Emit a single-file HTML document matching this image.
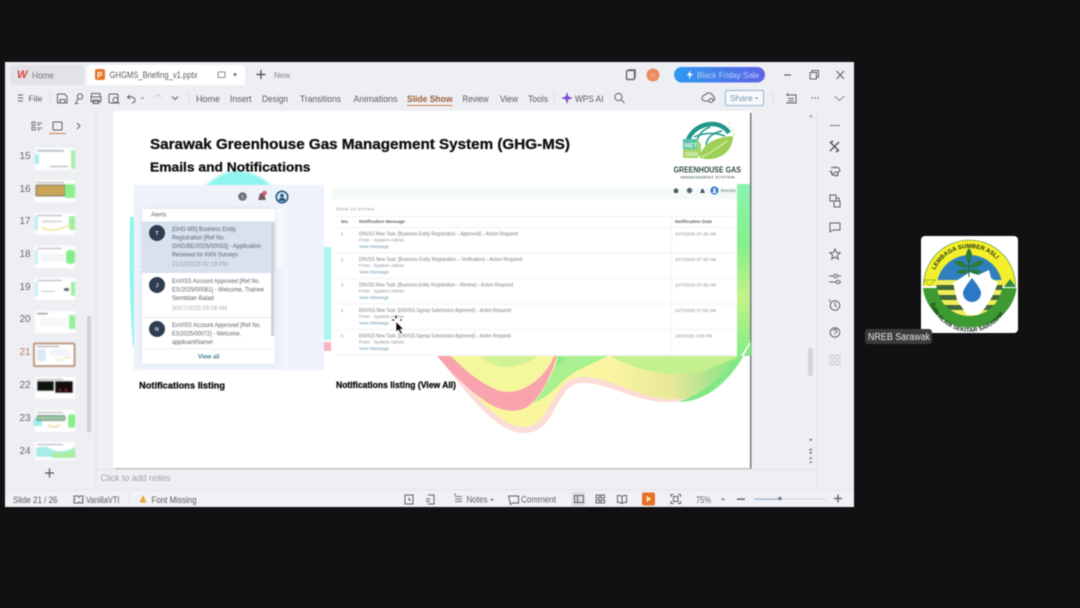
<!DOCTYPE html>
<html><head><meta charset="utf-8"><style>
html,body{margin:0;padding:0;background:#111114;width:1080px;height:608px;overflow:hidden}
svg{position:absolute;left:0;top:0;display:block;filter:blur(.42px)}
text{font-family:"Liberation Sans",sans-serif}
.u{font-size:9.500px;fill:#5a5b5f}
.ic{fill:none;stroke:#606165;stroke-width:1}
.t{font-size:5px;fill:#7a808a}
.l{font-size:4.2px;fill:#8b9098}
.v{font-size:4.2px;fill:#6a98ae}
.a{font-size:6px;fill:#5c636d}
.h{stroke:#111;stroke-width:.3px}
</style></head><body>
<svg width="1080" height="608" viewBox="0 0 1080 608" xmlns="http://www.w3.org/2000/svg">
<defs>
<linearGradient id="bf" x1="0" x2="1" y1="0" y2="0"><stop offset="0" stop-color="#2d9bf0"/><stop offset="1" stop-color="#5f63e8"/></linearGradient>
<linearGradient id="wav" x1="0" x2="1" y1="0" y2="0"><stop offset="0" stop-color="#f8f79c"/><stop offset=".55" stop-color="#fbf5a0"/><stop offset=".75" stop-color="#e6e898"/><stop offset=".88" stop-color="#a5e48e"/><stop offset="1" stop-color="#74ee80"/></linearGradient>
<linearGradient id="grn" x1="0" x2="0" y1="0" y2="1"><stop offset="0" stop-color="#8cf2b0"/><stop offset=".35" stop-color="#85f08a"/><stop offset=".65" stop-color="#c4f28a"/><stop offset="1" stop-color="#7eee84"/></linearGradient>
<path id="arcT" d="M935 270A38 38 0 0 1 1004 270"/>
<path id="arcB" d="M930 302A41 41 0 0 0 1009 302"/>
<clipPath id="disc"><circle cx="969.500" cy="283" r="33"/></clipPath>
<filter id="b1"><feGaussianBlur stdDeviation=".45"/></filter>
<filter id="b2"><feGaussianBlur stdDeviation="2.500"/></filter>
<filter id="b3"><feGaussianBlur stdDeviation="1.200"/></filter>
</defs>
<rect width="1080" height="608" fill="#111114"/>
<!-- window -->
<rect x="5" y="62" width="849" height="445" fill="#eeeff3"/>
<rect x="5" y="490" width="849" height="17" fill="#f0f1f5"/>
<line x1="5" y1="490" x2="854" y2="490" stroke="#e4e5e9"/>
<!-- tabs -->
<rect x="10" y="65" width="74" height="20" rx="3" fill="#e2e3e7"/>
<text x="17" y="78" font-size="11" font-weight="bold" fill="#d8413a" font-style="italic">W</text>
<text x="32" y="78.500" class="u" style="fill:#75767a" textLength="22" lengthAdjust="spacingAndGlyphs">Home</text>
<path d="M87 85V69a4 4 0 0 1 4-4h150a4 4 0 0 1 4 4v16z" fill="#fff"/>
<rect x="95" y="69" width="10" height="11" rx="2" fill="#e8762e"/>
<text x="97" y="78" font-size="8" fill="#fff" font-weight="bold">P</text>
<text x="109.500" y="78" class="u" textLength="88" lengthAdjust="spacingAndGlyphs">GHGMS_Briefing_v1.pptx</text>
<rect x="218" y="72" width="7" height="5.500" rx="1" class="ic" style="stroke:#8a8b90"/>
<circle cx="235" cy="74.500" r="1.500" fill="#777"/>
<path d="M256.500 74.500h9M261 70v9" stroke="#444" stroke-width="1.200" fill="none"/>
<text x="274" y="78" font-size="8" fill="#85868a">New</text>
<!-- title bar right -->
<rect x="626.500" y="70.500" width="8" height="9" rx="1" class="ic" style="stroke:#555;stroke-width:1.200"/>
<path d="M629 70v-.5h6.500v8.500" class="ic" style="stroke:#888"/>
<circle cx="653" cy="75" r="6.500" fill="#e98a5f"/>
<text x="650" y="77.500" font-size="6" fill="#f6c7ad">AI</text>
<rect x="674" y="67" width="91" height="15.500" rx="7.700" fill="url(#bf)"/>
<path d="M691 70l-4 5.500h2.800l-1.300 4 4.300-5.800h-2.800z" fill="#fff"/>
<text x="697" y="78" font-size="8.500" fill="#b9d2f4" textLength="62" lengthAdjust="spacingAndGlyphs">Black Friday Sale</text>
<path d="M784 75h7" stroke="#555" stroke-width="1.100"/>
<rect x="810" y="72.500" width="6.500" height="6.500" class="ic"/><path d="M812 72.500v-2h6.500v6.500h-2" class="ic"/>
<path d="M836.500 71l7.500 8M844 71l-7.500 8" class="ic" style="stroke-width:1.100"/>
<!-- toolbar -->
<path d="M18 95h5M18 98h5M18 101h5" class="ic"/>
<text x="28.500" y="101.500" class="u" style="font-size:8.500px">File</text>
<line x1="50" y1="92" x2="50" y2="104" stroke="#dfe0e4"/>
<path d="M57.500 94h7l2.500 2.500V103h-9.500zM60 103v-3.500h5v3.500" class="ic"/>
<circle cx="80" cy="96.500" r="2.700" class="ic"/><path d="M78 99l-2.500 4.500h3" class="ic"/>
<path d="M91.500 96.500v-3h8.500v3M91 97h10v4.500H91zM93 100h6v3.500h-6z" class="ic"/>
<rect x="109" y="94" width="9" height="9" rx="1.500" class="ic"/><circle cx="115.500" cy="100" r="2.500" class="ic"/><path d="M117.500 102l2 2" class="ic"/>
<path d="M130 95l-2.500 2 2.500 2M128 97h4a3 3 0 0 1 0 6" class="ic"/>
<path d="M141 97.500l1.500 1.500 1.500-1.500" fill="#666"/>
<path d="M155 97a3 3 0 0 1 4-2l2 2" fill="none" stroke="#c4c5c8"/>
<path d="M172 96.500l3 3 3-3" class="ic"/>
<line x1="189" y1="92" x2="189" y2="104" stroke="#dfe0e4"/>
<text x="196" y="102" class="u" textLength="24" lengthAdjust="spacingAndGlyphs">Home</text>
<text x="230" y="102" class="u" textLength="21.500" lengthAdjust="spacingAndGlyphs">Insert</text>
<text x="262" y="102" class="u" textLength="26" lengthAdjust="spacingAndGlyphs">Design</text>
<text x="300" y="102" class="u" textLength="41" lengthAdjust="spacingAndGlyphs">Transitions</text>
<text x="353.500" y="102" class="u" textLength="44" lengthAdjust="spacingAndGlyphs">Animations</text>
<text x="407" y="102" class="u" font-weight="bold" style="fill:#9c5e3c" textLength="45.500" lengthAdjust="spacingAndGlyphs">Slide Show</text>
<rect x="407" y="105" width="45.500" height="1" fill="#cf7c4e"/>
<text x="462.500" y="102" class="u" textLength="26" lengthAdjust="spacingAndGlyphs">Review</text>
<text x="500" y="102" class="u" textLength="18" lengthAdjust="spacingAndGlyphs">View</text>
<text x="528" y="102" class="u" textLength="20" lengthAdjust="spacingAndGlyphs">Tools</text>
<line x1="554" y1="92" x2="554" y2="104" stroke="#dfe0e4"/>
<path d="M567 92l1.500 4.500 4.500 1.500-4.500 1.500-1.500 4.500-1.500-4.500-4.500-1.500 4.500-1.500z" fill="#7a52d8"/>
<text x="575" y="102" class="u" textLength="28.500" lengthAdjust="spacingAndGlyphs">WPS AI</text>
<circle cx="618.500" cy="97" r="3.600" class="ic"/><path d="M621 99.500l3.500 3.500" class="ic"/>
<path d="M705 101a3 3 0 0 1 0-6 4.500 4.500 0 0 1 8 1 2.800 2.800 0 0 1 0 5z" class="ic"/>
<circle cx="711" cy="100.500" r="2" class="ic" style="fill:#eeeff3"/>
<rect x="725.500" y="90.500" width="38" height="15" rx="1.500" fill="#f8f9fb" stroke="#8fb6d0"/>
<text x="730" y="101" font-size="8.500" fill="#6c98b4">Share</text>
<path d="M755 97.500h3.500l-1.750 1.700z" fill="#6c8ea5"/>
<line x1="773" y1="92" x2="773" y2="104" stroke="#dfe0e4"/>
<path d="M786 95h10v8h-10M788 93v3M788 98.500h6M788 101h6" class="ic"/>
<circle cx="812" cy="98" r=".7" fill="#555"/><circle cx="815" cy="98" r=".7" fill="#555"/><circle cx="818" cy="98" r=".7" fill="#555"/>
<path d="M834.500 96l5 4.500 5-4.500" class="ic" style="stroke:#888"/>
<!-- thumbs pane -->
<line x1="96" y1="111" x2="96" y2="490" stroke="#e3e4e8"/>
<path d="M32 122h3v3h-3zM32 127h3v3h-3zM37 123h5M37 125h3M37 128h5M37 130h3" class="ic" style="stroke:#777"/>
<rect x="53" y="122" width="9" height="8" rx=".5" class="ic"/>
<rect x="49" y="133" width="17" height="1" fill="#d08258"/>
<path d="M77 123l3 3-3 3" class="ic" style="stroke:#666"/>
<g font-size="10" fill="#66686c">
<text x="19.500" y="159">15</text><text x="19.500" y="192">16</text><text x="19.500" y="224">17</text><text x="19.500" y="257">18</text><text x="19.500" y="290">19</text><text x="19.500" y="322">20</text><text x="19.500" y="355" fill="#b9805f">21</text><text x="19.500" y="388">22</text><text x="19.500" y="421">23</text><text x="19.500" y="454">24</text>
</g>
<!-- thumbnails -->
<g filter="url(#b1)">
<rect x="35" y="148" width="40" height="22" fill="#fff"/><rect x="37" y="150" width="27" height="1.500" fill="#9aa"/><rect x="71" y="150" width="4" height="19" fill="#a5f0b0"/><rect x="35" y="154" width="4" height="10" fill="#a5ece8"/><rect x="50" y="166" width="18" height="1" fill="#888"/>
<rect x="35" y="180" width="40" height="22" fill="#fff"/><rect x="36" y="182" width="28" height="1" fill="#999"/><rect x="36" y="185" width="29" height="11" rx="1" fill="#c9a654" stroke="#47503a"/><rect x="65" y="184" width="10" height="14" fill="#8ef08c"/>
<rect x="35" y="213" width="40" height="22" fill="#fff"/><rect x="37" y="215" width="25" height="1" fill="#99a"/><rect x="35" y="216" width="3" height="14" fill="#b8f2ee"/><rect x="69" y="216" width="6" height="14" fill="#9cf0a0"/><path d="M42 228q10 4 20 0t8 0" stroke="#e6e58f" fill="none" stroke-width="1.500"/><rect x="42" y="221" width="20" height="1" fill="#aab"/>
<rect x="35" y="246" width="40" height="22" fill="#fff"/><rect x="37" y="248" width="25" height="1" fill="#99a"/><rect x="35" y="250" width="3" height="14" fill="#c4f2ee"/><rect x="66" y="250" width="9" height="14" rx="3" fill="#84ef88"/><rect x="41" y="254" width="24" height="7" fill="#f3f5f6"/>
<rect x="35" y="278" width="40" height="22" fill="#fff"/><rect x="37" y="280" width="25" height="1" fill="#99a"/><rect x="35" y="282" width="3" height="14" fill="#c4f2ee"/><rect x="71" y="282" width="4" height="14" fill="#9cf0a0"/><rect x="64" y="288" width="5" height="3" fill="#4b5a6a"/><rect x="41" y="291" width="14" height="1" fill="#bbb"/>
<rect x="35" y="311" width="40" height="22" fill="#fff"/><rect x="37" y="313" width="11" height="1.200" fill="#667"/><rect x="69" y="315" width="6" height="14" fill="#93ef98"/><rect x="40" y="318" width="26" height="8" fill="#f6f7f8"/>
<rect x="34" y="343.500" width="40.500" height="22.500" rx="1" fill="#fff" stroke="#a8734e" stroke-width="1.500"/><rect x="37" y="346" width="22" height="1" fill="#889"/><rect x="37" y="349" width="9" height="12" fill="#dbe9f6"/><rect x="50" y="349" width="20" height="7" fill="#f3f4f6"/><path d="M55 359q4 3 8 0t8-1" stroke="#e6e58f" fill="none"/>
<rect x="35" y="377" width="40" height="22" fill="#fff"/><rect x="37" y="379" width="26" height="1" fill="#99a"/><rect x="37" y="381" width="17" height="10" fill="#07120f"/><rect x="55" y="381" width="18" height="12" fill="#12090c"/><circle cx="60" cy="390" r="1" fill="#a33"/><circle cx="66" cy="390" r="1" fill="#a33"/>
<rect x="35" y="410" width="40" height="22" fill="#fff"/><rect x="37" y="412" width="26" height="1" fill="#99a"/><rect x="34" y="418" width="8" height="8" fill="#a3ece8"/><rect x="68" y="414" width="7" height="14" rx="3" fill="#84ef88"/><rect x="37" y="415.500" width="28" height="5" rx="1" fill="#9cc6a4" stroke="#3a5f50" stroke-width=".7"/><path d="M48 425q6 4 12 0" stroke="#e6d87f" fill="none" stroke-width="1.500"/>
<rect x="35" y="442" width="40" height="18" fill="#fff"/><rect x="37" y="444" width="26" height="1" fill="#99a"/><path d="M36 448q10-3 15 1 10 5 24-2v10H36z" fill="#a9ebe6"/><path d="M52 452q10 4 23-4v10H52z" fill="#a9eea0"/>
</g>
<rect x="87" y="316" width="4" height="116" rx="2" fill="#cfd0d3"/>
<path d="M45 473h9M49.500 468.500v9" stroke="#555" stroke-width="1.200"/>
<!-- slide -->
<rect x="750" y="113" width="1.500" height="356" fill="#77797c"/>
<rect x="115" y="468" width="636" height="1.200" fill="#b6b7ba"/>
<rect x="113" y="111" width="637" height="357" fill="#fff"/>
<!-- notes -->
<text x="100.500" y="481" font-size="9" fill="#a0a1a5" textLength="70" lengthAdjust="spacingAndGlyphs">Click to add notes</text>
<line x1="96" y1="469.500" x2="817" y2="469.500" stroke="#e2e3e7"/>
<!-- blobs in slide -->
<path d="M204 187Q238 155 273 187z" fill="#8ff3ee" filter="url(#b3)"/>
<path d="M130 217h6v130h-3Q128 285 130 217z" fill="#94f4f0"/>
<rect x="323" y="247" width="8" height="93" fill="#a6f6f2"/>
<rect x="324" y="342" width="7" height="9" fill="#f6b5c0"/>
<!-- bottom wave -->
<path d="M437 355C460 385 495 433 523 433 560 433 553 383 583 383 610 383 635 402 667 402 705 402 730 375 751 340H437z" fill="#fcdcd6"/>
<path d="M442 355C465 382 497 427 523 427 553 427 550 377 583 377 610 377 635 396 667 399 705 402 730 375 751 340H442z" fill="url(#wav)"/>
<path d="M437 356C452 374 468 389 485 401 500 412 520 415 532 403 545 390 552 372 557 356z" fill="#f8a3ad"/>
<path d="M451 356C465 371 482 384 497 390 515 396 531 387 543 374 548 368 552 362 554 356z" fill="#f4f79c"/>
<path d="M480 356Q505 378 538 356z" fill="#d0f294"/>
<path d="M558 356C554 372 545 390 533 403 552 396 556 384 575 372 590 364 600 360 608 356z" fill="#a8f090"/>
<path d="M558 356L556 366 565 358z" fill="#7ef08a"/>
<path d="M610 356C635 370 680 382 712 368 725 362 735 358 745 356z" fill="#c4f08e"/>
<path d="M690 401C715 395 735 375 751 342V356H738C725 372 712 390 678 402z" fill="#82e884"/>
<path d="M737 184H750V342L737 358z" fill="url(#grn)"/>
<rect x="332" y="185" width="405" height="171" fill="#fff"/>
<rect x="332" y="188" width="405" height="11" fill="#f3faf9"/>
<!-- left panel -->
<rect x="134" y="185" width="190" height="185" fill="#edf2fb"/>
<rect x="285" y="185" width="1.500" height="185" fill="#f6f8fc"/>
<rect x="134" y="266" width="151" height="1" fill="#e2e5ea"/>
<rect x="275" y="209" width="8" height="58" fill="#f8f9fc"/>
<circle cx="242.500" cy="196.500" r="4.300" fill="#6b7178"/><rect x="242" y="195" width="1" height="3.500" fill="#dde"/>
<path d="M258 200c1-1 1-5 2-6 1-1.500 3-1.500 4 0 1 1 1 5 2 6z" fill="#7a5660"/><circle cx="264.500" cy="193" r="2.300" fill="#d85c78"/>
<circle cx="282" cy="197" r="6.500" fill="#25557a"/><circle cx="282" cy="197" r="5" fill="#dbe8f2"/><circle cx="282" cy="195.500" r="1.800" fill="#25557a"/><path d="M278.500 201a3.500 3.500 0 0 1 7 0z" fill="#25557a"/>
<rect x="142" y="209" width="133" height="155" fill="#c8cdd6" filter="url(#b2)" opacity=".5"/>
<rect x="142" y="209" width="133" height="155" fill="#fff"/>
<rect x="142" y="221.500" width="133" height="51.500" fill="#d7e2ee"/>
<rect x="271" y="222" width="3.500" height="114" fill="#ccd6e0"/>
<line x1="142" y1="317.500" x2="271" y2="317.500" stroke="#e6e8ec"/>
<line x1="142" y1="349" x2="275" y2="349" stroke="#eff0f3"/>
<text x="151" y="216.500" class="a" textLength="15.500" lengthAdjust="spacingAndGlyphs">Alerts</text>
<circle cx="157" cy="233" r="8" fill="#2f3d50"/><text x="155.300" y="235" font-size="5.500" fill="#dde" font-weight="bold">T</text>
<circle cx="157" cy="285" r="8" fill="#2f3d50"/><text x="155.500" y="287" font-size="5.500" fill="#dde" font-weight="bold">J</text>
<circle cx="157" cy="329" r="8" fill="#2f3d50"/><text x="154.800" y="331" font-size="5.500" fill="#dde" font-weight="bold">N</text>
<g>
<text x="172" y="231" class="a" textLength="64" lengthAdjust="spacingAndGlyphs">[GHG-MS] Business Entity</text>
<text x="172" y="239.500" class="a" textLength="53" lengthAdjust="spacingAndGlyphs">Registration [Ref No.</text>
<text x="172" y="248" class="a" textLength="89" lengthAdjust="spacingAndGlyphs">GHG/BE/2025/00033] - Application</text>
<text x="172" y="256.500" class="a" textLength="66" lengthAdjust="spacingAndGlyphs">Received for KKN Surveys</text>
<text x="172" y="266" class="a" style="fill:#94a0ad" textLength="56" lengthAdjust="spacingAndGlyphs">21/10/2025 02:19 PM</text>
<text x="172" y="283" class="a" textLength="88" lengthAdjust="spacingAndGlyphs">EnVISS Account Approved [Ref No.</text>
<text x="172" y="291.500" class="a" textLength="92" lengthAdjust="spacingAndGlyphs">ES/2025/00081] - Welcome, Trainee</text>
<text x="172" y="300" class="a" textLength="42" lengthAdjust="spacingAndGlyphs">Sembilan Balad</text>
<text x="172" y="310" class="a" style="fill:#a8aeb6" textLength="55" lengthAdjust="spacingAndGlyphs">30/07/2025 09:08 AM</text>
<text x="172" y="327" class="a" textLength="89" lengthAdjust="spacingAndGlyphs">EnVISS Account Approved [Ref No.</text>
<text x="172" y="335.500" class="a" textLength="69" lengthAdjust="spacingAndGlyphs">ES/2025/00072] - Welcome,</text>
<text x="172" y="344" class="a" textLength="41" lengthAdjust="spacingAndGlyphs">applicantName!</text>
</g>
<text x="198" y="358.500" font-size="6.500" fill="#4f7f9e" font-weight="bold" textLength="21.500" lengthAdjust="spacingAndGlyphs">View all</text>
<!-- right table -->
<path d="M673 190.500l3-2.500 3 2.500h-1v2.500h-4v-2.500z" fill="#4a5560"/><circle cx="689.500" cy="190.500" r="2.700" fill="#5c6670"/><path d="M700 193l1-2c0-3 3-3 3 0l1 2z" fill="#4f5862"/>
<circle cx="714.500" cy="190.500" r="4" fill="#2f78c4"/><circle cx="714.500" cy="189.500" r="1.300" fill="#fff"/><path d="M712.500 193a2 2 0 0 1 4 0z" fill="#fff"/>
<text x="721" y="192" font-size="4.500" fill="#666e78" textLength="15" lengthAdjust="spacingAndGlyphs">bmcose</text>
<text x="336" y="210.500" class="l" textLength="38" lengthAdjust="spacing">Show 10 entries</text>
<g stroke="#eceef0" stroke-width=".8">
<line x1="336" y1="216.500" x2="735" y2="216.500"/><line x1="336" y1="227.500" x2="735" y2="227.500"/>
<line x1="336" y1="253" x2="735" y2="253"/><line x1="336" y1="278.500" x2="735" y2="278.500"/><line x1="336" y1="304" x2="735" y2="304"/><line x1="336" y1="329.500" x2="735" y2="329.500"/><line x1="336" y1="355" x2="735" y2="355"/>
<line x1="671.500" y1="217" x2="671.500" y2="355"/>
</g>
<text x="341" y="223" font-size="4.800" fill="#5f666e" font-weight="bold" textLength="8" lengthAdjust="spacingAndGlyphs">No.</text>
<text x="359" y="223" font-size="4.800" fill="#5f666e" font-weight="bold" textLength="46" lengthAdjust="spacingAndGlyphs">Notification Message</text>
<text x="675" y="223" font-size="4.800" fill="#5f666e" font-weight="bold" textLength="37" lengthAdjust="spacingAndGlyphs">Notification Date</text>
<g>
<text x="341" y="235.500" class="l">1</text>
<text x="359" y="235.500" class="t" textLength="159" lengthAdjust="spacingAndGlyphs">DNVSS New Task: [Business Entity Registration – Approved] – Action Required</text>
<text x="359" y="241.500" class="l" textLength="45" lengthAdjust="spacingAndGlyphs">From : System Admin</text>
<text x="359" y="248" class="v" textLength="30" lengthAdjust="spacingAndGlyphs">View Message</text>
<text x="675" y="235.500" class="l" textLength="41" lengthAdjust="spacingAndGlyphs">10/7/2025 07:49 AM</text>
<text x="341" y="261" class="l">2</text>
<text x="359" y="261" class="t" textLength="163" lengthAdjust="spacingAndGlyphs">DNVSS New Task: [Business Entity Registration – Verification] – Action Required</text>
<text x="359" y="267" class="l" textLength="45" lengthAdjust="spacingAndGlyphs">From : System Admin</text>
<text x="359" y="273.500" class="v" textLength="30" lengthAdjust="spacingAndGlyphs">View Message</text>
<text x="675" y="261" class="l" textLength="41" lengthAdjust="spacingAndGlyphs">10/7/2025 07:49 AM</text>
<text x="341" y="286.500" class="l">3</text>
<text x="359" y="286.500" class="t" textLength="154" lengthAdjust="spacingAndGlyphs">DNVSS New Task: [Business Entity Registration – Review] – Action Required</text>
<text x="359" y="292.500" class="l" textLength="45" lengthAdjust="spacingAndGlyphs">From : System Admin</text>
<text x="359" y="299" class="v" textLength="30" lengthAdjust="spacingAndGlyphs">View Message</text>
<text x="675" y="286.500" class="l" textLength="41" lengthAdjust="spacingAndGlyphs">10/7/2025 07:49 AM</text>
<text x="341" y="312" class="l">4</text>
<text x="359" y="312" class="t" textLength="152" lengthAdjust="spacingAndGlyphs">ENVISS New Task: [ENVISS Signup Submission Approved] – Action Required</text>
<text x="359" y="318" class="l" textLength="45" lengthAdjust="spacingAndGlyphs">From : System Admin</text>
<text x="359" y="324.500" class="v" textLength="30" lengthAdjust="spacingAndGlyphs">View Message</text>
<text x="675" y="312" class="l" textLength="41" lengthAdjust="spacingAndGlyphs">10/7/2025 07:59 AM</text>
<text x="341" y="337.500" class="l">5</text>
<text x="359" y="337.500" class="t" textLength="152" lengthAdjust="spacingAndGlyphs">ENVISS New Task: [ENVISS Signup Submission Approved] – Action Required</text>
<text x="359" y="343.500" class="l" textLength="45" lengthAdjust="spacingAndGlyphs">From : System Admin</text>
<text x="359" y="350" class="v" textLength="30" lengthAdjust="spacingAndGlyphs">View Message</text>
<text x="675" y="337.500" class="l" textLength="37" lengthAdjust="spacingAndGlyphs">10/5/2025 3:08 PM</text>
</g>
<!-- cursor -->
<path d="M396 321.500l0 10.500 2.500-2 2 4 1.800-.8-2-3.900 3.200-.3z" fill="#111" stroke="#fff" stroke-width=".6"/>
<path d="M396 315.500v3M392 320h2.500M400 320h2" stroke="#111" stroke-width="1"/>
<!-- titles -->
<text x="150" y="149" font-size="14.500" font-weight="bold" fill="#111" class="h" textLength="420" lengthAdjust="spacingAndGlyphs">Sarawak Greenhouse Gas Management System (GHG-MS)</text>
<text x="150" y="171.500" font-size="13" font-weight="bold" fill="#111" class="h" textLength="160.500" lengthAdjust="spacingAndGlyphs">Emails and Notifications</text>
<text x="139" y="388.500" font-size="8.800" font-weight="bold" fill="#111" class="h" textLength="86" lengthAdjust="spacingAndGlyphs">Notifications listing</text>
<text x="336" y="388" font-size="8.800" font-weight="bold" fill="#111" class="h" textLength="120" lengthAdjust="spacingAndGlyphs">Notifications listing (View All)</text>
<!-- GHG logo -->
<g>
<path d="M688 140C692 129 703 124 712 124 720 124 726 128 729 133" fill="none" stroke="#1e9688" stroke-width="4.500"/>
<path d="M697 143C697 136 702 130 710 127M706 145C707 138 712 133 722 131" fill="none" stroke="#23988a" stroke-width="1.500"/>
<path d="M694 137C703 133 714 132 725 136" fill="none" stroke="#23988a" stroke-width="1.500"/>
<path d="M700 158C700 147 712 137 733 136 733 150 722 160 706 159z" fill="#9ed057"/>
<path d="M702 157Q714 151 727 141" stroke="#e6f2c7" fill="none" stroke-width="1"/>
<path d="M683 139H697L701 144V155L697 158H683z" fill="#a3d56a"/>
<path d="M683 139H697V149H683z" fill="#58c2a8"/>
<text x="684.500" y="147.500" font-size="6.500" font-weight="bold" fill="#e6f7ea">NET</text>
<text x="685" y="156" font-size="5.800" font-weight="bold" fill="#f2f7cf">2050</text>
<g fill="#c9cd7a"><circle cx="730" cy="127" r=".8"/><circle cx="733" cy="130" r=".8"/><circle cx="733.500" cy="134" r=".8"/><circle cx="729" cy="123" r=".6"/></g>
<text x="673.500" y="172.500" font-size="7.800" font-weight="bold" fill="#2f4b47" textLength="67.500" lengthAdjust="spacingAndGlyphs">GREENHOUSE GAS</text>
<text x="680.500" y="178.500" font-size="4" fill="#35514d" textLength="54" lengthAdjust="spacingAndGlyphs">MANAGEMENT SYSTEM</text>
</g>
<!-- right rail -->
<line x1="817" y1="111" x2="817" y2="490" stroke="#e3e4e8"/>
<path d="M809.500 117l1.500-2 1.500 2z" fill="#777"/>
<rect x="808" y="348" width="5" height="28" rx="2" fill="#d4d5d8"/>
<path d="M809 439h3.500l-1.750 2.500z" fill="#777"/><path d="M809 450.500l1.750-2.500 1.750 2.500zM809 452h3.500l-1.750 2.500z" fill="#777"/><path d="M809 459l1.750-2.500L812.500 459zM809 463h3.500l-1.750-2z" fill="#888"/>
<rect x="830" y="125" width="10" height="1" fill="#77787c"/>
<path d="M830 142l9 9M839 142l-9 9M830 143l3-2M836 152l3-2" fill="none" stroke="#55565a" stroke-width="1.400"/>
<path d="M831 168l3-1q1 2 2 0l3 1 1 3-2 1v3h-2m-3 0h-1v-3l-2-1zM836 172a2 2 0 1 1 0 4 2 2 0 1 1 0-4" class="ic"/>
<path d="M830 195h6v6h-6zM834 201h6v6h-6zM836 198h3v3" class="ic"/>
<path d="M830 223h10v7h-7l-3 2z" class="ic"/>
<path d="M835 249l1.500 3.500 3.800.3-3 2.400 1 3.800-3.300-2-3.300 2 1-3.800-3-2.400 3.800-.3z" class="ic"/>
<path d="M829 276h4M838 276h3M829 282h7M840 282h1" class="ic"/><circle cx="835.500" cy="276" r="1.800" class="ic"/><circle cx="838" cy="282" r="1.800" class="ic"/>
<circle cx="835" cy="305.500" r="4.800" class="ic"/><path d="M835 302.500v3l2 1.500M830 302l-.5-2.500" class="ic"/>
<circle cx="835" cy="332.500" r="4.800" class="ic"/><path d="M833.300 331a1.700 1.700 0 1 1 2.500 1.500c-.6.400-.8.800-.8 1.500M835 335.500v.5" class="ic"/>
<g fill="none" stroke="#c9cacd"><rect x="830" y="355" width="4" height="4" rx="1"/><rect x="836" y="355" width="4" height="4" rx="1"/><rect x="830" y="361" width="4" height="4" rx="1"/><rect x="836" y="361" width="4" height="4" rx="1"/></g>
<!-- status bar -->
<text x="13" y="503" font-size="8.800" fill="#595a5e" textLength="44.500" lengthAdjust="spacingAndGlyphs">Slide 21 / 26</text>
<path d="M74 496h4l1 1.500 1-1.500h3v3l-1 1 1 1v2h-3l-1-1-1 1h-4v-3l1-1-1-1z" class="ic" style="stroke:#666"/>
<text x="86" y="503" font-size="8.800" fill="#595a5e" textLength="33.500" lengthAdjust="spacingAndGlyphs">VanillaVTI</text>
<line x1="129" y1="493" x2="129" y2="505" stroke="#ecdfe0"/>
<path d="M143 495l3.500 7.500h-7z" fill="#eaa53b"/>
<text x="151.500" y="503" font-size="8.800" fill="#595a5e" textLength="45" lengthAdjust="spacingAndGlyphs">Font Missing</text>
<rect x="405" y="495" width="8" height="9" class="ic"/><path d="M409 497.500v2.500h2" class="ic"/>
<path d="M428 495h6v9h-6M426 499h4M426 501.500h4" class="ic"/>
<path d="M455 496.500h7M455 499h7M455 501.500h7" class="ic" style="stroke:#777"/><path d="M454 494l2 1" class="ic"/>
<text x="466.500" y="502.500" font-size="8.800" fill="#5f6064" textLength="21" lengthAdjust="spacingAndGlyphs">Notes</text>
<path d="M490 499h4l-2 2z" fill="#666"/>
<path d="M508.500 496h10v7h-6l-2 1.500z" class="ic"/>
<text x="521" y="502.500" font-size="8.800" fill="#5f6064" textLength="35" lengthAdjust="spacingAndGlyphs">Comment</text>
<rect x="572" y="492" width="13" height="14" rx="1" fill="#dcdde1"/>
<rect x="574.500" y="495.500" width="9" height="7" class="ic"/><path d="M577.500 495.500v7" class="ic"/>
<rect x="596" y="495" width="3.500" height="3" class="ic"/><rect x="601" y="495" width="3.500" height="3" class="ic"/><rect x="596" y="500" width="3.500" height="3" class="ic"/><rect x="601" y="500" width="3.500" height="3" class="ic"/>
<path d="M622 496.500q-2-1.500-4.500-1v7q2.500-.5 4.500 1 2-1.500 4.500-1v-7q-2.500-.5-4.500 1zM622 496.500v7" class="ic"/>
<rect x="642" y="492.500" width="13" height="13" rx="2" fill="#e5702a"/><path d="M646.500 496l5 3-5 3z" fill="#fbe9a8"/>
<path d="M671 497v-2.500h2.500M678 494.500h2.500V497M680.500 501v2.500H678M673.500 503.500H671V501" class="ic"/><rect x="673.500" y="496.500" width="4.500" height="5" class="ic"/>
<text x="696" y="503" font-size="8.800" fill="#6a6b6f" textLength="15" lengthAdjust="spacingAndGlyphs">75%</text>
<path d="M721 498.500h4l-2 2z" fill="#666"/>
<rect x="737" y="498.500" width="8" height="1.300" fill="#555"/>
<rect x="754" y="498.500" width="72" height="1" fill="#d5d6da"/><rect x="754" y="498.500" width="26" height="1.200" fill="#8fb3cf"/>
<circle cx="780" cy="498.500" r="1.800" fill="#7d7e82"/>
<path d="M834 498.500h8M838 494.500v8" stroke="#555" stroke-width="1.200"/>
<!-- participant tile -->
<rect x="921" y="236" width="97" height="97" rx="4" fill="#fff"/>
<path d="M923.500 286a46 46 0 0 1 92 0z" fill="#f3ef2a"/>
<path d="M923.500 286a46 46 0 0 1 92 0" fill="none" stroke="#3d7f38" stroke-width=".6"/>
<circle cx="969.500" cy="288" r="33" fill="#2f7fbf"/>
<path d="M923 288H1016.500A47 44 0 0 1 923 288z" fill="#3d9a30"/>
<path d="M923.500 280h12l-6 6z" fill="#f3ef2a" stroke="#3d7f38" stroke-width=".5"/>
<path d="M1004 287l6-8 6 8z" fill="#2e8a48"/>
<g clip-path="url(#disc)">
<rect x="936" y="280" width="67" height="5" fill="#f0ed5a"/>
<rect x="936" y="285" width="67" height="5" fill="#3f6a3a"/>
<rect x="936" y="290" width="67" height="5" fill="#f0ed5a"/>
<rect x="936" y="295" width="67" height="5" fill="#42693e"/>
<rect x="936" y="300" width="67" height="5" fill="#f0ed5a"/>
<rect x="936" y="305" width="67" height="5" fill="#42693e"/>
<rect x="936" y="310" width="67" height="6" fill="#f0ed5a"/>
</g>
<path d="M953 283L970 272 978 275 989 270 991 278 998 283 992 297 985 308 978 315 967 315 957 300z" fill="#fff"/>
<path d="M968 266q-8-8-14-4 4 6 14 6zM970 266q8-8 14-4-4 6-14 6zM969 264q-6-9 0-16 6 7 0 16zM968 270q-7-2-12 2 6 4 12 0zM970 270q7-2 12 2-6 4-12 0z" fill="#2c7a3c"/>
<path d="M969 260v17" stroke="#225f2c" stroke-width="1"/>
<path d="M972 278q-9 11-9 15a9 9 0 0 0 18 0q0-4-9-15z" fill="#2a78c6"/>
<text font-size="6" font-weight="bold" fill="#22341a"><textPath href="#arcT">LEMBAGA SUMBER ASLI</textPath></text>
<text font-size="6" font-weight="bold" fill="#10301a"><textPath href="#arcB" startOffset="2">DAN ALAM SEKITAR SARAWAK</textPath></text>
<rect x="865" y="329" width="67" height="15" rx="3" fill="#3a3a3d"/>
<text x="868" y="340" font-size="10" fill="#e8e8ea" textLength="62" lengthAdjust="spacingAndGlyphs">NREB Sarawak</text>
</svg>
</body></html>
